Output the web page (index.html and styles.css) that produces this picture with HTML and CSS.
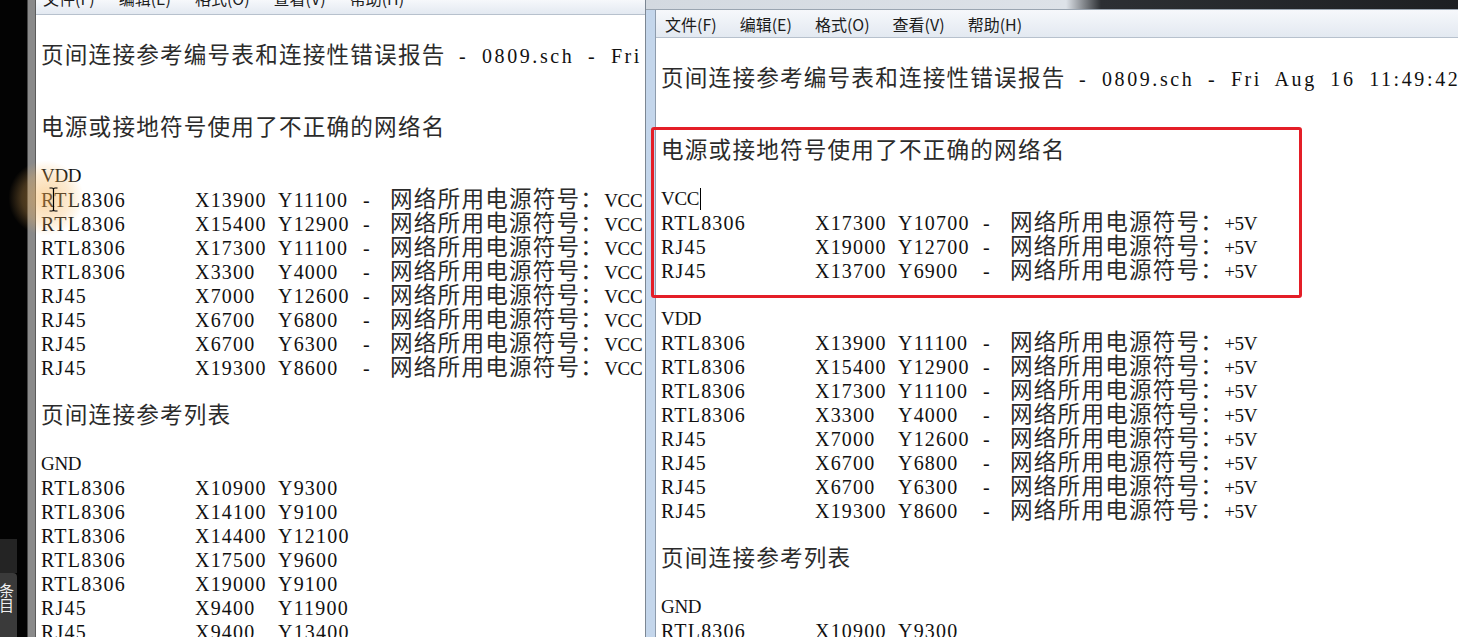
FILE: index.html
```html
<!DOCTYPE html>
<html lang="zh-CN">
<head>
    <meta charset="UTF-8">
    <title>页间连接参考编号表和连接性错误报告 - 0809.sch</title>
    <link rel="stylesheet" href="styles.css">
</head>
<body>
<div class="screen">
    <div class="strip">
        <div class="dock-top"></div>
        <div class="dock">条目</div>
    </div>

    <div class="win win-back">
        <div class="pane">
            <div class="menubar">
                <span>文件(F)</span><span>编辑(E)</span><span>格式(O)</span><span>查看(V)</span><span>帮助(H)</span>
            </div>
            <div class="client">
                <div class="doc">
                    <div class="ln"></div>
                    <div class="ln"><span class="zh">页间连接参考编号表和连接性错误报告</span><span class="tail"> - 0809.sch - Fri Aug 16 11:49:42 2019</span></div>
                    <div class="ln"></div>
                    <div class="ln"></div>
                    <div class="ln"><span class="zh">电源或接地符号使用了不正确的网络名</span></div>
                    <div class="ln"></div>
                    <div class="ln net">VDD</div>
                    <div class="ln"><span class="n">RTL8306</span><span class="x">X13900</span><span class="y">Y11100</span><span class="d">-</span><span class="zh">网络所用电源符号：</span><span class="net">VCC</span></div>
                    <div class="ln"><span class="n">RTL8306</span><span class="x">X15400</span><span class="y">Y12900</span><span class="d">-</span><span class="zh">网络所用电源符号：</span><span class="net">VCC</span></div>
                    <div class="ln"><span class="n">RTL8306</span><span class="x">X17300</span><span class="y">Y11100</span><span class="d">-</span><span class="zh">网络所用电源符号：</span><span class="net">VCC</span></div>
                    <div class="ln"><span class="n">RTL8306</span><span class="x">X3300</span><span class="y">Y4000</span><span class="d">-</span><span class="zh">网络所用电源符号：</span><span class="net">VCC</span></div>
                    <div class="ln"><span class="n">RJ45</span><span class="x">X7000</span><span class="y">Y12600</span><span class="d">-</span><span class="zh">网络所用电源符号：</span><span class="net">VCC</span></div>
                    <div class="ln"><span class="n">RJ45</span><span class="x">X6700</span><span class="y">Y6800</span><span class="d">-</span><span class="zh">网络所用电源符号：</span><span class="net">VCC</span></div>
                    <div class="ln"><span class="n">RJ45</span><span class="x">X6700</span><span class="y">Y6300</span><span class="d">-</span><span class="zh">网络所用电源符号：</span><span class="net">VCC</span></div>
                    <div class="ln"><span class="n">RJ45</span><span class="x">X19300</span><span class="y">Y8600</span><span class="d">-</span><span class="zh">网络所用电源符号：</span><span class="net">VCC</span></div>
                    <div class="ln"></div>
                    <div class="ln"><span class="zh">页间连接参考列表</span></div>
                    <div class="ln"></div>
                    <div class="ln net">GND</div>
                    <div class="ln"><span class="n">RTL8306</span><span class="x">X10900</span><span class="y">Y9300</span></div>
                    <div class="ln"><span class="n">RTL8306</span><span class="x">X14100</span><span class="y">Y9100</span></div>
                    <div class="ln"><span class="n">RTL8306</span><span class="x">X14400</span><span class="y">Y12100</span></div>
                    <div class="ln"><span class="n">RTL8306</span><span class="x">X17500</span><span class="y">Y9600</span></div>
                    <div class="ln"><span class="n">RTL8306</span><span class="x">X19000</span><span class="y">Y9100</span></div>
                    <div class="ln"><span class="n">RJ45</span><span class="x">X9400</span><span class="y">Y11900</span></div>
                    <div class="ln"><span class="n">RJ45</span><span class="x">X9400</span><span class="y">Y13400</span></div>
                </div>
            </div>
        </div>
    </div>

    <div class="win win-front">
        <div class="titlebar"></div>
        <div class="frame">
            <div class="pane">
                <div class="menubar">
                    <span>文件(F)</span><span>编辑(E)</span><span>格式(O)</span><span>查看(V)</span><span>帮助(H)</span>
                </div>
                <div class="client">
                    <div class="doc">
                        <div class="ln"></div>
                        <div class="ln"><span class="zh">页间连接参考编号表和连接性错误报告</span><span class="tail"> - 0809.sch - Fri Aug 16 11:49:42 2019</span></div>
                        <div class="ln"></div>
                        <div class="ln"></div>
                        <div class="ln"><span class="zh">电源或接地符号使用了不正确的网络名</span></div>
                        <div class="ln"></div>
                        <div class="ln net">VCC<span class="caret"></span></div>
                        <div class="ln"><span class="n">RTL8306</span><span class="x">X17300</span><span class="y">Y10700</span><span class="d">-</span><span class="zh">网络所用电源符号：</span><span class="net">+5V</span></div>
                        <div class="ln"><span class="n">RJ45</span><span class="x">X19000</span><span class="y">Y12700</span><span class="d">-</span><span class="zh">网络所用电源符号：</span><span class="net">+5V</span></div>
                        <div class="ln"><span class="n">RJ45</span><span class="x">X13700</span><span class="y">Y6900</span><span class="d">-</span><span class="zh">网络所用电源符号：</span><span class="net">+5V</span></div>
                        <div class="ln"></div>
                        <div class="ln net">VDD</div>
                        <div class="ln"><span class="n">RTL8306</span><span class="x">X13900</span><span class="y">Y11100</span><span class="d">-</span><span class="zh">网络所用电源符号：</span><span class="net">+5V</span></div>
                        <div class="ln"><span class="n">RTL8306</span><span class="x">X15400</span><span class="y">Y12900</span><span class="d">-</span><span class="zh">网络所用电源符号：</span><span class="net">+5V</span></div>
                        <div class="ln"><span class="n">RTL8306</span><span class="x">X17300</span><span class="y">Y11100</span><span class="d">-</span><span class="zh">网络所用电源符号：</span><span class="net">+5V</span></div>
                        <div class="ln"><span class="n">RTL8306</span><span class="x">X3300</span><span class="y">Y4000</span><span class="d">-</span><span class="zh">网络所用电源符号：</span><span class="net">+5V</span></div>
                        <div class="ln"><span class="n">RJ45</span><span class="x">X7000</span><span class="y">Y12600</span><span class="d">-</span><span class="zh">网络所用电源符号：</span><span class="net">+5V</span></div>
                        <div class="ln"><span class="n">RJ45</span><span class="x">X6700</span><span class="y">Y6800</span><span class="d">-</span><span class="zh">网络所用电源符号：</span><span class="net">+5V</span></div>
                        <div class="ln"><span class="n">RJ45</span><span class="x">X6700</span><span class="y">Y6300</span><span class="d">-</span><span class="zh">网络所用电源符号：</span><span class="net">+5V</span></div>
                        <div class="ln"><span class="n">RJ45</span><span class="x">X19300</span><span class="y">Y8600</span><span class="d">-</span><span class="zh">网络所用电源符号：</span><span class="net">+5V</span></div>
                        <div class="ln"></div>
                        <div class="ln"><span class="zh">页间连接参考列表</span></div>
                        <div class="ln"></div>
                        <div class="ln net">GND</div>
                        <div class="ln"><span class="n">RTL8306</span><span class="x">X10900</span><span class="y">Y9300</span></div>
                    </div>
                </div>
            </div>
        </div>
        <!-- highlight drawn over the report -->
        <div class="mark"></div>
    </div>

    <div class="glow"></div>
    <svg class="ibeam" width="9" height="25" viewBox="0 0 9 25">
        <path d="M0.5 1h2.5q1.5 0 1.5 1.5q0-1.5 1.5-1.5h2.5M4.5 2.5v20M0.5 24h2.5q1.5 0 1.5-1.5q0 1.5 1.5 1.5h2.5" fill="none" stroke="#000" stroke-width="1.2"/>
    </svg>
</div>
</body>
</html>
```

FILE: styles.css
```css
* {
    margin: 0;
    padding: 0;
    box-sizing: border-box;
}
html, body {
    width: 1458px;
    height: 637px;
    overflow: hidden;
    background: #000;
}
.screen {
    position: relative;
    display: flex;
    height: 637px;
    overflow: hidden;
}

/* dark desktop strip on the far left */
.strip {
    flex: none;
    width: 27px;
    background: #030303;
    display: flex;
    flex-direction: column;
    justify-content: flex-end;
}
.dock-top {
    width: 17px;
    height: 34px;
    background: #242424;
}
.dock {
    width: 17px;
    height: 64px;
    padding-top: 10px;
    background: #3a3a3a;
    border-radius: 0 4px 0 0;
    color: #eee;
    font: 15px "Noto Sans CJK SC", sans-serif;
    writing-mode: vertical-rl;
    overflow: hidden;
}

/* notepad windows */
.win {
    display: flex;
    flex-direction: column;
}
.pane {
    flex: 1;
    min-width: 0;
    display: flex;
    flex-direction: column;
}
.menubar {
    display: flex;
    flex: none;
    overflow: hidden;
    background: linear-gradient(#f6f8fb, #e3e9f1);
    border-bottom: 1px solid #b7c1cd;
    font-family: "Noto Sans CJK SC", sans-serif;
    font-size: 16px;
    color: #1c1c1c;
    white-space: nowrap;
}
.client {
    flex: 1;
    background: #fff;
    overflow: hidden;
    padding: 5px 0 0 5px;
}

/* report text: serif latin in fixed columns, song-like cjk */
.doc {
    font-family: "Liberation Serif", "Noto Sans CJK SC", serif;
    font-size: 20px;
    letter-spacing: 1.2px;
    color: #111;
}
.ln {
    height: 24px;
    line-height: 24px;
    white-space: nowrap;
}
.ln .n,
.ln .x,
.ln .y,
.ln .d {
    display: inline-block;
}
.ln .n {
    width: 154px;
}
.ln .x,
.ln .y {
    width: 83px;
}
.ln .d {
    width: 29px;
    padding-left: 2px;
}
.net {
    font-size: 19px;
    letter-spacing: -0.3px;
}
.tail {
    white-space: pre;
    letter-spacing: 2.6px;
    word-spacing: 6px;
}
.doc .zh {
    font-family: "Noto Sans CJK SC", sans-serif;
    font-size: 22.6px;
    letter-spacing: 1.2px;
    line-height: 0;
    color: #2b2b2b;
}
.caret {
    display: inline-block;
    width: 1px;
    height: 22px;
    margin-left: 1px;
    background: #000;
    vertical-align: -5px;
}

/* window behind, on the left */
.win-back {
    flex: none;
    width: 618px;
    border-left: 1px solid #474747;
    padding-left: 7px;
    background: #8a8a8a;
}
.win-back .pane {
    border-left: 1px solid #5c5c5c;
    box-shadow: inset 1px 0 #d6d6d6;
}
.win-back .menubar {
    height: 15px;
    align-items: flex-end;
    padding-left: 7px;
    gap: 24px;
}
.win-back .menubar span {
    line-height: 31px;
}

/* window in front, on the right */
.win-front {
    position: relative;
    flex: none;
    width: 840px;
    border-left: 1px solid #7c8793;
}
.titlebar {
    flex: none;
    height: 10px;
    background: linear-gradient(to right, #d3d9e0 0, #dde2e8 420px, #2c2f33 455px, #1c1e21 100%);
    border-bottom: 1px solid #9aa5b1;
}
.frame {
    flex: 1;
    display: flex;
    border-left: 9px solid #c4d6eb;
}
.win-front .pane {
    border-left: 1px solid #8e9cad;
}
.win-front .menubar {
    height: 28px;
    align-items: center;
    padding-left: 9px;
    gap: 23px;
}
.mark {
    position: absolute;
    left: 5px;
    top: 127px;
    width: 651px;
    height: 171px;
    border: 3px solid #e41e27;
    border-radius: 3px;
}

/* mouse pointer highlight */
.glow {
    position: absolute;
    left: 8px;
    top: 160px;
    width: 76px;
    height: 76px;
    border-radius: 50%;
    background: radial-gradient(circle, rgba(246, 176, 80, 0.5) 0, rgba(246, 184, 96, 0.28) 45%, rgba(246, 190, 110, 0) 70%);
}
.ibeam {
    position: absolute;
    left: 49px;
    top: 187px;
}
```
